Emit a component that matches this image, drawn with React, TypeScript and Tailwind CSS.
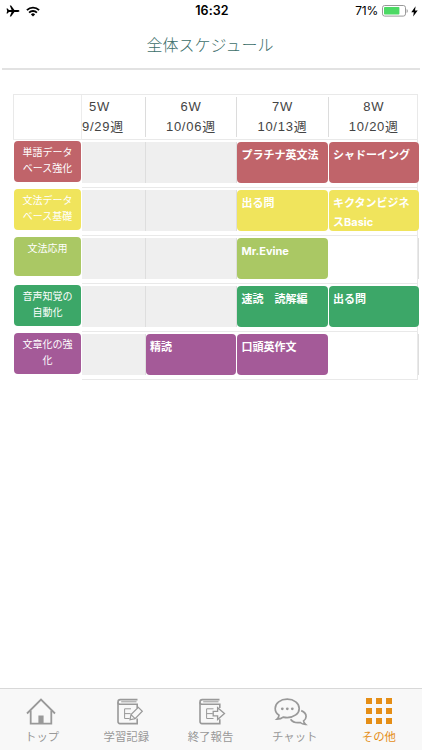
import type { ReactNode } from "react";
import clsx from "clsx";

type Task = { title: string; tone: string };
// "past" is a greyed out week, null an empty one
type Cell = Task | "past" | null;
type Row = { label: string[]; tone: string; cells: Cell[]; short?: boolean };

const RED = "bg-[#c0646a]";
const YELLOW = "bg-[#f0e45c]";
const LIME = "bg-[#aac864]";
const GREEN = "bg-[#3ca768]";
const PURPLE = "bg-[#a45a98]";

const weeks = [
  { name: "6W", date: "10/06週" },
  { name: "7W", date: "10/13週" },
  { name: "8W", date: "10/20週" },
];

const rows: Row[] = [
  {
    label: ["単語データ", "ベース強化"],
    tone: RED,
    cells: ["past", "past", { title: "プラチナ英文法", tone: RED }, { title: "シャドーイング", tone: RED }],
  },
  {
    label: ["文法データ", "ベース基礎"],
    tone: YELLOW,
    cells: ["past", "past", { title: "出る問", tone: YELLOW }, { title: "キクタンビジネスBasic", tone: YELLOW }],
  },
  {
    label: ["文法応用"],
    tone: LIME,
    short: true,
    cells: ["past", "past", { title: "Mr.Evine", tone: LIME }, null],
  },
  {
    label: ["音声知覚の", "自動化"],
    tone: GREEN,
    cells: ["past", "past", { title: "速読　読解編", tone: GREEN }, { title: "出る問", tone: GREEN }],
  },
  {
    label: ["文章化の強", "化"],
    tone: PURPLE,
    cells: ["past", { title: "精読", tone: PURPLE }, { title: "口頭英作文", tone: PURPLE }, null],
  },
];

function StatusBar() {
  return (
    <div className="flex h-[22px] items-center justify-between pr-[4px] pl-[6px] text-black">
      <div className="flex w-[100px] items-center gap-[6px]">
        <svg width="14" height="12" viewBox="0 0 14 12" fill="currentColor">
          <path d="M13.4 6c0 .6-.7.9-1.5.9H8.4L5.1 11.6H3.8L5.6 6.9H2.9L1.6 8.6H.5L1.2 6 .5 3.4h1.1l1.3 1.7h2.7L3.8.4h1.3l3.3 4.7h3.5c.8 0 1.5.3 1.5.9z" />
        </svg>
        <svg width="14" height="11" viewBox="0 0 14 11" fill="none" stroke="currentColor" strokeWidth="1.9">
          <path d="M.9 4.1a8.8 8.8 0 0 1 12.2 0" />
          <path d="M3.1 6.6a5.6 5.6 0 0 1 7.8 0" />
          <path d="M7 10.6 4.9 8.4a3 3 0 0 1 4.2 0z" fill="currentColor" stroke="none" />
        </svg>
      </div>
      <span className="font-[Inter,sans-serif] text-[12.5px] font-semibold tracking-[0.1px]">16:32</span>
      <div className="flex w-[100px] items-center justify-end">
        <span className="mr-[4px] font-[Inter,sans-serif] text-[12px] tracking-[-0.2px]">71%</span>
        <svg width="26" height="12" viewBox="0 0 26 12">
          <rect x=".5" y=".5" width="23" height="10.6" rx="2.2" fill="none" stroke="#999" />
          <rect x="2" y="2" width="15.4" height="7.6" rx=".8" fill="#4cd964" />
          <path d="M24.6 4v4q1.2-.6 1.2-2t-1.2-2z" fill="#999" />
        </svg>
        <svg className="ml-[3px]" width="7" height="11" viewBox="0 0 7 11">
          <path d="M4.6.3.3 6.2h2.5L2.2 10.6 6.7 4.6H4z" />
        </svg>
      </div>
    </div>
  );
}

function ScheduleCell({ cell, last }: { cell: Cell; last: boolean }) {
  if (cell === null || cell === "past") {
    return (
      <div
        className={clsx(
          "h-[41px] border-r border-[#dedede]",
          cell === "past" && "bg-[#efefef]",
          last && "mr-[-2px]",
        )}
      />
    );
  }
  return (
    <div
      className={clsx(
        "h-[41px] rounded-[4px] pt-[4px] pl-[4.3px] font-[Inter,'Noto_Sans_CJK_JP',sans-serif] text-[11px] leading-[18.5px] font-bold text-white",
        last ? "mr-[-2px]" : "mr-[0.8px]",
        cell.tone,
      )}
    >
      {cell.title}
    </div>
  );
}

function Schedule() {
  return (
    <div className="mt-[24px] ml-[13px] w-[405px]">
      <div className="grid h-[45px] grid-cols-[68px_63.7px_91.5px_91.5px_minmax(0,1fr)] border-t border-r border-l border-[#e9e9e9] text-center text-[13px] leading-[19.5px] tracking-[0.75px] text-[#444]">
        <div className="border-r border-[#ececec]" />
        <div className="mt-[2px] h-[40px] border-r border-[#dcdcdc] text-left">
          <div className="pl-[7px]">5W</div>
          <div>9/29週</div>
        </div>
        {weeks.map((week, i) => (
          <div
            key={week.name}
            className={clsx("mt-[2px] h-[40px]", i < 2 ? "border-r border-[#dcdcdc]" : "mr-[-2px]")}
          >
            <div>{week.name}</div>
            <div>{week.date}</div>
          </div>
        ))}
      </div>

      <div className="flex">
        <div className="w-[69px] border-t border-[#ececec]">
          {rows.map((row) => (
            <div key={row.label[0]} className="h-[48px] pt-[1px] pl-[1px]">
              <div
                className={clsx(
                  "w-[67px] rounded-[4px] pt-[3.5px] text-center text-[10px] leading-[16.5px] text-white",
                  row.short ? "h-[39px]" : "h-[41px]",
                  row.tone,
                )}
              >
                {row.label.map((line) => (
                  <div key={line}>{line}</div>
                ))}
              </div>
            </div>
          ))}
        </div>
        <div className="flex-1 border-r border-b border-[#e9e9e9]">
          {rows.map((row) => (
            <div
              key={row.label[0]}
              className="grid h-[48px] grid-cols-[63.7px_91.5px_91.5px_minmax(0,1fr)] border-t border-[#e9e9e9] pt-[2px]"
            >
              {row.cells.map((cell, i) => (
                <ScheduleCell key={i} cell={cell} last={i === 3} />
              ))}
            </div>
          ))}
        </div>
      </div>
    </div>
  );
}

function HomeIcon() {
  return (
    <svg className="mr-[2px]" width="30" height="28" viewBox="0 0 30 28" fill="none" stroke="currentColor" strokeWidth="1.8">
      <path d="M1 15.500 15 1.600l14 13.900" />
      <path d="M4.700 12.500v13.200h20.600V12.500" />
      <path d="M12.400 17.500h5.200v8h-5.200z" fill="currentColor" stroke="none" />
    </svg>
  );
}

function RecordIcon() {
  return (
    <svg className="ml-[7px]" width="28" height="28" viewBox="0 0 28 28" fill="none" stroke="currentColor" strokeWidth="1.6">
      <path d="M21.500 1.600H4.300Q2 1.600 2 4v19.600q0 2 2 2h17.200v-5" />
      <path d="M20.500 3.800H5.200" strokeWidth="1" />
      <path d="M2 4.300q0 2 2 2h17.200v4" />
      <path d="M15 10.800H8.600v9.700h5M8.600 15.600h6" strokeWidth="1" />
      <path d="m14 21.800 1-5.200 7.300-7.200 4 3.800-7.200 7.400zM15 16.600l4.100 4" strokeWidth="1.2" />
    </svg>
  );
}

function ReportIcon() {
  return (
    <svg className="ml-[3px]" width="28" height="28" viewBox="0 0 28 28" fill="none" stroke="currentColor" strokeWidth="1.6">
      <path d="M21.500 1.600H4.300Q2 1.600 2 4v19.600q0 2 2 2h17.800v-4.400" />
      <path d="M20.500 3.800H5.200" strokeWidth="1" />
      <path d="M2 4.300q0 2 2 2h17.800v3.600" />
      <path d="M15.500 10.800H8.600v9.700h6.900M8.600 15.600h6.200" strokeWidth="1" />
      <path d="M15.200 13.300h4.400V9.700l6.900 5.900-6.900 5.900v-3.600h-4.400z" strokeWidth="1.300" />
    </svg>
  );
}

function ChatIcon() {
  return (
    <svg className="mr-[7px]" width="34" height="28" viewBox="0 0 34 28" fill="none" stroke="currentColor" strokeWidth="1.7">
      <path d="M13.200 1.200c6.800 0 12 4 12 9.200s-5.200 9.200-12 9.200c-1.400 0-2.800-.2-4-.5-1.600 1.400-3.600 2-6.200 2 1.300-1.100 1.900-2.300 2-4C2.500 15.500 1.200 13.200 1.200 10.400c0-5.200 5.200-9.200 12-9.200z" />
      <path d="M27.200 12.600c3 1.200 4.900 3.200 4.900 5.800 0 1.800-1 3.300-2.500 4.500.1 1.400.7 2.400 1.900 3.400-2.200 0-4-.6-5.300-1.800-4.200.6-7.900-.8-9.600-3.300" />
      <g fill="currentColor" stroke="none">
        <circle cx="8.300" cy="10.800" r="1.400" />
        <circle cx="13.300" cy="10.800" r="1.400" />
        <circle cx="18.300" cy="10.800" r="1.400" />
      </g>
    </svg>
  );
}

function OtherIcon() {
  return (
    <div className="grid grid-cols-3 gap-[4px]">
      {Array.from({ length: 9 }, (_, i) => (
        <span key={i} className="size-[6px] bg-[#e58e16]" />
      ))}
    </div>
  );
}

const tabs: { label: string; icon: ReactNode; active?: boolean }[] = [
  { label: "トップ", icon: <HomeIcon /> },
  { label: "学習記録", icon: <RecordIcon /> },
  { label: "終了報告", icon: <ReportIcon /> },
  { label: "チャット", icon: <ChatIcon /> },
  { label: "その他", icon: <OtherIcon />, active: true },
];

export default function App() {
  return (
    <div className="flex h-[750px] w-[422px] flex-col overflow-hidden bg-white font-['Liberation_Sans','Noto_Sans_CJK_JP',sans-serif]">
      <StatusBar />
      <header className="mx-[2px] flex h-[48px] items-center justify-center border-b-2 border-[#e2e2e2] pt-[2px] pr-[2px]">
        <h1 className="text-[16px] leading-none font-light text-[#3c6e69]">全体スケジュール</h1>
      </header>
      <main className="flex-1">
        <Schedule />
      </main>
      <nav className="grid h-[62px] grid-cols-5 border-t border-[#d8d8d8] bg-[#f8f8f8] pr-px">
        {tabs.map((tab) => (
          <div
            key={tab.label}
            className={clsx(
              "flex flex-col items-center pt-[9px] text-[11.4px] leading-[14px]",
              tab.active ? "text-[#e58e16]" : "text-[#999]",
            )}
          >
            <div className="h-[32px]">{tab.icon}</div>
            <span>{tab.label}</span>
          </div>
        ))}
      </nav>
    </div>
  );
}
